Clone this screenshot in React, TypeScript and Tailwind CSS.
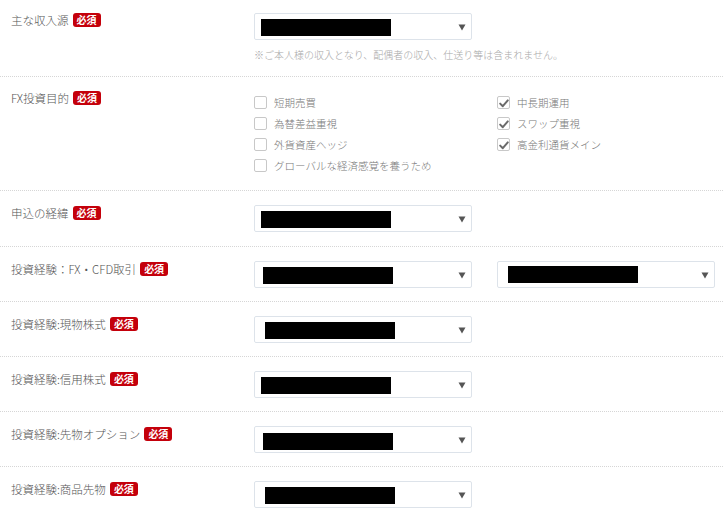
import React from "react";

const font = { fontFamily: '"Noto Sans CJK JP", "Noto Sans", sans-serif' };

function Badge() {
  return (
    <span className="ml-[4px] inline-flex h-[14px] items-center rounded-[3px] bg-[#c4000b] px-[4px] text-[10px] font-bold leading-[14px] text-white">
      必須
    </span>
  );
}

function Label({ text }: { text: string }) {
  return (
    <div className="flex w-[254px] shrink-0 items-center pl-[11px] text-[11.5px] font-light leading-[14px] text-[#555]">
      <span>{text}</span>
      <Badge />
    </div>
  );
}

function Select({ bl = 7, bt = 5 }: { bl?: number; bt?: number }) {
  return (
    <div className="relative h-[27px] w-[218px] shrink-0 rounded-[2px] border border-[#dde3ea] bg-white">
      <div
        className="absolute h-[17px] w-[130px] bg-black"
        style={{ left: bl - 1, top: bt }}
      />
      <svg
        className="absolute right-[5px] top-[10px]"
        width="8"
        height="7"
        viewBox="0 0 8 7"
      >
        <path d="M0.5 0.5 H7.5 L4 6.5 Z" fill="#555" />
      </svg>
    </div>
  );
}

function Check({ checked, text }: { checked?: boolean; text: string }) {
  return (
    <div className="flex h-[21px] items-center">
      <span className="relative flex h-[13px] w-[13px] shrink-0 items-center justify-center rounded-[2px] border border-[#c8c8c8] bg-white">
        {checked && (
          <svg width="10" height="9" viewBox="0 0 10 9" className="mt-[1px]">
            <path
              d="M1.2 4.6 L3.8 7.2 L8.8 1.4"
              fill="none"
              stroke="#6a6a6a"
              strokeWidth="2"
              strokeLinecap="round"
              strokeLinejoin="round"
            />
          </svg>
        )}
      </span>
      <span className="ml-[7px] text-[10.5px] font-light text-[#777]">{text}</span>
    </div>
  );
}

function Row({
  label,
  children,
  className = "",
}: {
  label: string;
  children: React.ReactNode;
  className?: string;
}) {
  return (
    <div className={`flex items-start border-b border-dotted border-[#d6d6d6] ${className}`}>
      <div className="pt-[1px]">
        <Label text={label} />
      </div>
      {children}
    </div>
  );
}

export default function App() {
  return (
    <div className="h-[519px] w-[723px] overflow-hidden bg-white" style={font}>
      {/* Row 1 */}
      <div className="flex items-start border-b border-dotted border-[#d6d6d6] pb-[14px] pt-[13px]">
        <Label text="主な収入源" />
        <div className="flex flex-col">
          <Select bl={7} bt={5} />
          <div className="mt-[8px] text-[10px] font-light leading-[14px] text-[#a8a8a8]">
            ※ご本人様の収入となり、配偶者の収入、仕送り等は含まれません。
          </div>
        </div>
      </div>

      {/* Row 2 */}
      <div className="flex h-[114px] items-start border-b border-dotted border-[#d6d6d6] pt-[13px]">
        <div className="pt-[1px]">
          <Label text="FX投資目的" />
        </div>
        <div className="mt-[2px] flex gap-[25px]">
          <div className="w-[218px]">
            <Check text="短期売買" />
            <Check text="為替差益重視" />
            <Check text="外貨資産ヘッジ" />
            <Check text="グローバルな経済感覚を養うため" />
          </div>
          <div className="w-[218px]">
            <Check checked text="中長期運用" />
            <Check checked text="スワップ重視" />
            <Check checked text="高金利通貨メイン" />
          </div>
        </div>
      </div>

      <Row label="申込の経緯" className="h-[56px] pt-[14px]">
        <Select bl={7} bt={5} />
      </Row>

      <Row label="投資経験：FX・CFD取引" className="h-[55px] pt-[14px]">
        <div className="flex gap-[25px]">
          <Select bl={9} bt={5} />
          <Select bl={11} bt={4} />
        </div>
      </Row>

      <Row label="投資経験:現物株式" className="h-[55px] pt-[14px]">
        <Select bl={11} bt={5} />
      </Row>

      <Row label="投資経験:信用株式" className="h-[55px] pt-[14px]">
        <Select bl={7} bt={5} />
      </Row>

      <Row label="投資経験:先物オプション" className="h-[55px] pt-[14px]">
        <Select bl={9} bt={6} />
      </Row>

      <div className="flex items-start pt-[14px]">
        <div className="pt-[1px]">
          <Label text="投資経験:商品先物" />
        </div>
        <Select bl={11} bt={5} />
      </div>
    </div>
  );
}
